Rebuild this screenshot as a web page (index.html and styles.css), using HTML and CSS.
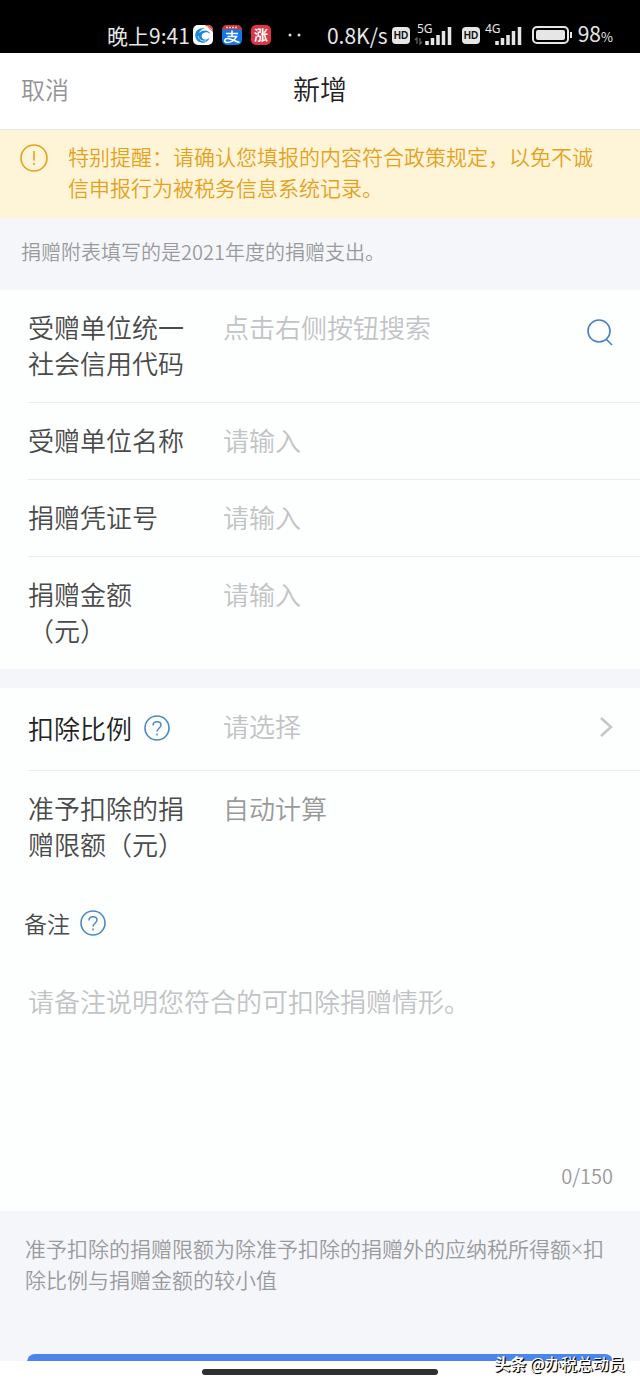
FILE: index.html
```html
<!DOCTYPE html>
<html lang="zh-CN">
<head>
  <meta charset="UTF-8">
  <meta name="viewport" content="width=device-width, initial-scale=1.0">
  <title>新增</title>
  <link rel="stylesheet" href="styles.css">
</head>
<body>
  <div class="status-bar">
    <div class="status-left">
      <span class="time">晚上9:41</span>
      <svg class="app-icon" viewBox="0 0 20 20">
        <rect width="20" height="20" rx="5" fill="#fff"/>
        <path d="M2.500 12C1 6 6 2 12 3.500c-3 .5-5 2-6 4.500 4-4 10-3 11.500 1-2-2-5-2.500-7-1-3 2-2 6 1 6.500 2 .5 4-.5 5-2-1 4-5 6-8.500 5-3-.5-5-2.500-5.500-5.500z" fill="#1c86d8"/>
        <path d="M5 11c1 4 4 5.500 8 5" fill="none" stroke="#bfe2fa"/>
        <path d="M12 0h3a5 5 0 0 1 5 5v2z" fill="#d8453c"/>
        <path d="M14 1l5 4" stroke="#f4c9bd"/>
      </svg>
      <svg class="app-icon" viewBox="0 0 20 20">
        <rect width="20" height="20" rx="5" fill="#1677e6"/>
        <path d="M0 5a5 5 0 0 1 5-5h10a5 5 0 0 1 5 5q-10-2-20 0z" fill="#d83434"/>
        <path d="M4 2.500h12" stroke="#f6d2c4" stroke-width="1.500" stroke-dasharray="2 1"/>
        <path d="M4 8.500h12M10 5.500v6M5.500 11.500h9c-2 4-6 6-10 6-3-1-2-4 1-4 4 0 7 3 12 4" fill="none" stroke="#fff" stroke-width="1.600"/>
      </svg>
      <svg class="app-icon" viewBox="0 0 20 20">
        <rect width="20" height="20" rx="5" fill="#dc3545"/>
        <text x="10" y="15" text-anchor="middle" class="app-text">涨</text>
      </svg>
      <svg class="dots" viewBox="0 0 14 4" fill="#ddd">
        <circle cx="2" cy="2" r="1.500"/>
        <circle cx="11" cy="2" r="1.500"/>
      </svg>
    </div>
    <div class="status-right">
      <span class="speed">0.8K/s</span>
      <svg class="hd" viewBox="0 0 18 17">
        <rect width="18" height="17" rx="4" fill="#e6e6e6"/>
        <text x="9" y="12" text-anchor="middle" class="hd-text">HD</text>
      </svg>
      <svg class="signal" viewBox="0 0 40 30">
        <text x="3" y="13" class="net-text">5G</text>
        <path d="M3 24v-6l-2 2M6 18v6l2-2" fill="none" stroke="#666" stroke-width="1.200"/>
        <path d="M13 21v4M18.500 18v7M24 15v10M29.500 11v14M35.500 7v18" stroke="#e6e6e6" stroke-width="3.500"/>
      </svg>
      <svg class="hd" viewBox="0 0 18 17">
        <rect width="18" height="17" rx="4" fill="#e6e6e6"/>
        <text x="9" y="12" text-anchor="middle" class="hd-text">HD</text>
      </svg>
      <svg class="signal" viewBox="0 0 40 30">
        <text x="1" y="13" class="net-text">4G</text>
        <path d="M13 21v4M18.500 18v7M24 15v10M29.500 11v14M35.500 7v18" stroke="#e6e6e6" stroke-width="3.500"/>
      </svg>
      <svg class="battery" viewBox="0 0 42 18">
        <rect x="1" y="1" width="35" height="16" rx="4" fill="none" stroke="#e6e6e6" stroke-width="2"/>
        <rect x="4" y="4" width="29" height="10" rx="2" fill="#e6e6e6"/>
        <path d="M39 6v6" stroke="#e6e6e6" stroke-width="2"/>
      </svg>
      <span class="percent">98<small>%</small></span>
    </div>
  </div>

  <header class="header">
    <button type="button" class="cancel-btn">取消</button>
    <h1>新增</h1>
  </header>

  <main class="content">
    <div class="notice">
      <svg class="notice-icon" viewBox="0 0 28 28" fill="none" stroke="#e5a11c">
        <circle cx="14" cy="14" r="13" stroke-width="1.600"/>
        <path d="M14 7v9.500M14 19v2" stroke-width="1.600"/>
      </svg>
      <p>特别提醒：请确认您填报的内容符合政策规定，以免不诚信申报行为被税务信息系统记录。</p>
    </div>
    <p class="info">捐赠附表填写的是2021年度的捐赠支出。</p>

    <form>
      <section class="group">
        <div class="row">
          <label for="code">受赠单位统一社会信用代码</label>
          <input type="text" id="code" placeholder="点击右侧按钮搜索">
          <button type="button" class="icon-btn" aria-label="搜索">
            <svg class="search-icon" viewBox="0 0 26 28" fill="none" stroke="#4a7fc8" stroke-width="1.600">
              <circle cx="12" cy="13" r="11"/>
              <path d="M19 21l6 6"/>
            </svg>
          </button>
        </div>
        <div class="row">
          <label for="name">受赠单位名称</label>
          <input type="text" id="name" placeholder="请输入">
        </div>
        <div class="row">
          <label for="number">捐赠凭证号</label>
          <input type="text" id="number" placeholder="请输入">
        </div>
        <div class="row">
          <label for="amount">捐赠金额（元）</label>
          <input type="text" id="amount" placeholder="请输入">
        </div>
      </section>

      <section class="group">
        <div class="row row-select">
          <div class="label-box">
            <label for="ratio">扣除比例</label>
            <button type="button" class="icon-btn" aria-label="扣除比例说明">
              <svg class="help-icon" viewBox="0 0 26 26" fill="none" stroke="#4a8ac4">
                <circle cx="13" cy="13" r="12" stroke-width="1.600"/>
                <path d="M9 10.500c0-5 8-5 8-.5 0 3-4 3.500-4 6.500M13 18.500v2" stroke-width="1.500"/>
              </svg>
            </button>
          </div>
          <select id="ratio">
            <option>请选择</option>
          </select>
          <svg class="arrow" viewBox="0 0 14 20" fill="none" stroke="#c4c6c9" stroke-width="2.500">
            <path d="M2 1l10 9-10 9"/>
          </svg>
        </div>
        <div class="row">
          <label for="limit">准予扣除的捐赠限额（元）</label>
          <output id="limit">自动计算</output>
        </div>
      </section>

      <section class="remark">
        <div class="remark-title">
          <label for="remark">备注</label>
          <button type="button" class="icon-btn" aria-label="备注说明">
            <svg class="help-icon" viewBox="0 0 26 26" fill="none" stroke="#4a8ac4">
              <circle cx="13" cy="13" r="12" stroke-width="1.600"/>
              <path d="M9 10.500c0-5 8-5 8-.5 0 3-4 3.500-4 6.500M13 18.500v2" stroke-width="1.500"/>
            </svg>
          </button>
        </div>
        <textarea id="remark" rows="4" maxlength="150" placeholder="请备注说明您符合的可扣除捐赠情形。"></textarea>
        <p class="count">0/150</p>
      </section>

      <p class="tip">准予扣除的捐赠限额为除准予扣除的捐赠外的应纳税所得额×扣除比例与捐赠金额的较小值</p>
      <button type="submit" class="submit-btn" aria-label="保存"></button>
    </form>
  </main>

  <footer class="nav-bar">
    <div class="handle"></div>
    <span class="watermark"><b>头条</b> @办税总动员</span>
  </footer>
</body>
</html>
```
FILE: styles.css
```css
* {
  box-sizing: border-box;
}

body {
  margin: 0;
  height: 100vh;
  display: flex;
  flex-direction: column;
  font-family: "Noto Sans CJK SC", sans-serif;
  font-weight: 350;
  font-size: 26px;
  line-height: 36px;
  color: #4a4a4a;
  background-color: #fff;
}

h1, p {
  margin: 0;
  font-weight: inherit;
}

button, input, select, textarea {
  font: inherit;
  color: inherit;
  border: none;
  border-radius: 0;
  background: none;
  padding: 0;
  margin: 0;
  outline: none;
}

button {
  cursor: pointer;
}

svg {
  display: block;
  flex-shrink: 0;
}

/* Status bar */
.status-bar {
  display: flex;
  justify-content: space-between;
  flex-shrink: 0;
  height: 53px;
  padding: 18px 27px 0 107px;
  background-color: #000;
  color: #e6e6e6;
  font-size: 21px;
  font-weight: 400;
}

.status-left, .status-right {
  display: flex;
  align-items: center;
  height: 34px;
  white-space: nowrap;
}

.status-left {
  gap: 9px;
}

.time {
  margin-right: -6px;
}

.app-icon {
  width: 20px;
  height: 20px;
}

.app-text {
  font-size: 14px;
  font-weight: 700;
  fill: #fff;
}

.dots {
  width: 14px;
  height: 4px;
  margin-left: 8px;
}

.status-right {
  gap: 4px;
}

.hd {
  width: 18px;
  height: 17px;
}

.hd-text {
  font-family: "Liberation Sans", sans-serif;
  font-size: 10px;
  font-weight: 700;
  fill: #111;
}

.signal {
  width: 40px;
  height: 30px;
  margin-right: 4px;
}

.net-text {
  font-family: "Noto Sans", sans-serif;
  font-size: 12px;
  fill: #e6e6e6;
}

.battery {
  width: 42px;
  height: 18px;
}

.percent small {
  font-size: 13px;
}

/* Header */
.header {
  display: grid;
  grid-template-columns: 1fr auto 1fr;
  align-items: center;
  flex-shrink: 0;
  height: 77px;
  padding: 0 21px 4px;
  border-bottom: 1px solid #e4e6e6;
}

.header h1 {
  font-size: 27px;
  color: #222;
}

.cancel-btn {
  justify-self: start;
  font-size: 24px;
  color: #939393;
}

.content {
  flex: 1;
  min-height: 0;
  overflow: hidden;
  background-color: #f5f6fa;
}

.notice {
  display: flex;
  gap: 20px;
  padding: 11px 40px 15px 20px;
  background-color: #fef5d9;
  color: #e5a11c;
  font-size: 21px;
  line-height: 31px;
}

.notice-icon {
  width: 28px;
  height: 28px;
  margin-top: 3px;
}

.info {
  padding: 18px 21px 22px;
  font-size: 20px;
  line-height: 32px;
  color: #9a9a9d;
}

/* Form */
.group {
  padding-left: 28px;
  background-color: #fdfefe;
}

.group + .group {
  margin-top: 19px;
}

.row {
  display: flex;
  align-items: flex-start;
  gap: 39px;
  padding: 19px 27px 21px 0;
  border-bottom: 1px solid #ececee;
}

.row:last-child {
  border-bottom: none;
}

.row > label, .label-box {
  width: 156px;
  flex-shrink: 0;
}

.row input, .row select, .row output {
  flex: 1;
  min-width: 0;
  height: 36px;
}

.row output {
  color: #999;
}

::placeholder {
  color: #c2c3c5;
  opacity: 1;
}

.row select {
  appearance: none;
  color: #c2c3c5;
}

.row-select {
  padding: 22px 27px 24px 0;
}

.row-select select {
  margin-top: -2px;
}

.label-box {
  display: flex;
  align-items: center;
  gap: 12px;
  color: #222;
}

.search-icon {
  width: 26px;
  height: 28px;
  margin-top: 9px;
}

.help-icon {
  width: 26px;
  height: 26px;
}

.arrow {
  width: 14px;
  height: 20px;
  margin-top: 7px;
}

.remark {
  padding: 22px 27px 17px 28px;
  background-color: #fdfefe;
}

.remark-title {
  display: flex;
  align-items: center;
  gap: 10px;
  margin-left: -4px;
  font-size: 23px;
}

.remark textarea {
  display: block;
  width: 100%;
  margin-top: 42px;
  resize: none;
}

.count {
  margin-top: 31px;
  font-size: 20px;
  text-align: right;
  color: #999;
}

.tip {
  padding: 23px 25px 0;
  font-family: "Noto Sans", "Noto Sans CJK SC", sans-serif;
  font-size: 21px;
  line-height: 31px;
  color: #9a9a9d;
}

.submit-btn {
  display: block;
  width: calc(100% - 54px);
  height: 80px;
  margin: 58px 27px 0;
  border-radius: 8px;
  background-color: #4a85ee;
}

/* Bottom bar */
.nav-bar {
  position: relative;
  flex-shrink: 0;
  height: 26px;
  padding-top: 8px;
}

.handle {
  width: 37%;
  height: 6px;
  margin: 0 auto;
  border-radius: 3px;
  background-color: #303030;
}

.watermark {
  position: absolute;
  right: 15px;
  bottom: 12px;
  font-size: 16px;
  font-weight: 400;
  line-height: 24px;
  color: #fff;
  text-shadow: 1px 1px 1px #000, 1px 1px 0 #222;
}
```
